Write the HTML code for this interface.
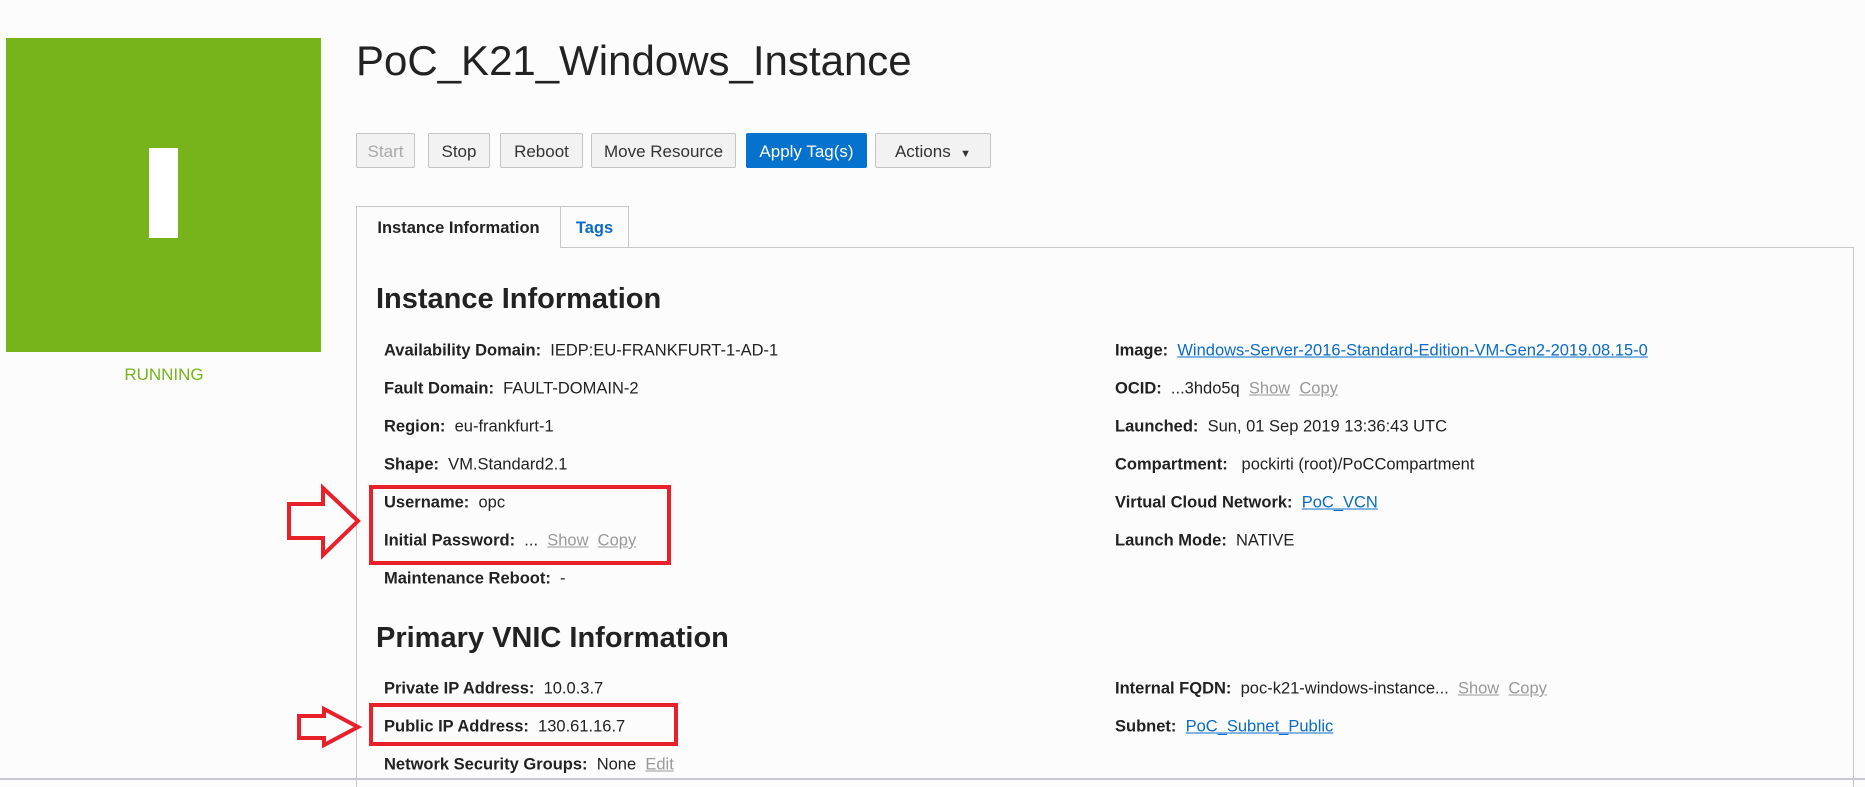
<!DOCTYPE html>
<html><head><meta charset="utf-8"><style>
body{margin:0;width:1865px;height:782px;background:#fcfcfc;font-family:"Liberation Sans",sans-serif;position:relative;overflow:hidden;color:#222}
.a{position:absolute;white-space:nowrap}
.btn{position:absolute;top:133px;height:35px;border:1px solid #c4c4c4;border-radius:2px;background:#f2f2f2;font-size:17px;line-height:35px;text-align:center;color:#333;box-sizing:border-box}
.row{position:absolute;font-size:16.5px;white-space:nowrap;transform:translateY(-50%)}
.row b{color:#222}
.lk{color:#0a6bc8;text-decoration:underline}
.gl{color:#999;text-decoration:underline}
</style></head><body>
<div class="a" style="left:6px;top:38px;width:315px;height:314px;background:#77b31a"></div>
<div class="a" style="left:149px;top:148px;width:29px;height:90px;background:#fff"></div>
<div class="a" style="left:0;width:328px;text-align:center;top:365px;font-size:17px;color:#77b31a">RUNNING</div>
<div class="a" style="left:356px;top:37px;font-size:42px;color:#222">PoC_K21_Windows_Instance</div>
<div class="btn" style="left:356px;width:59px;color:#aaa">Start</div>
<div class="btn" style="left:428px;width:62px">Stop</div>
<div class="btn" style="left:500px;width:83px">Reboot</div>
<div class="btn" style="left:591px;width:145px">Move Resource</div>
<div class="btn" style="left:746px;width:121px;background:#0572ce;border-color:#0572ce;color:#fff">Apply Tag(s)</div>
<div class="btn" style="left:875px;width:116px">Actions &nbsp;<span style="font-size:11px">▼</span></div>
<div class="a" style="left:356px;top:247px;width:1498px;height:540px;border:1px solid #c8c8c8;box-sizing:border-box;border-bottom:none"></div>
<div class="a" style="left:356px;top:206px;width:205px;height:42px;border:1px solid #c8c8c8;border-bottom:none;background:#fcfcfc;box-sizing:border-box;font-size:16.5px;font-weight:bold;line-height:42px;text-align:center">Instance Information</div>
<div class="a" style="left:561px;top:206px;width:68px;height:41px;border:1px solid #c8c8c8;border-left:none;border-bottom:none;box-sizing:border-box;font-size:16.5px;font-weight:bold;line-height:42px;text-align:center;color:#0a6bc8">Tags</div>
<div class="a" style="left:0;top:778px;width:1865px;height:2px;background:#c8c8d0"></div>
<div class="a" style="left:376px;top:283px;font-size:29px;font-weight:bold">Instance Information</div>
<div class="a" style="left:376px;top:622px;font-size:29px;font-weight:bold">Primary VNIC Information</div>
<div class="row" style="left:384px;top:351px"><b>Availability Domain:</b>&nbsp; IEDP:EU-FRANKFURT-1-AD-1</div>
<div class="row" style="left:384px;top:389px"><b>Fault Domain:</b>&nbsp; FAULT-DOMAIN-2</div>
<div class="row" style="left:384px;top:427px"><b>Region:</b>&nbsp; eu-frankfurt-1</div>
<div class="row" style="left:384px;top:465px"><b>Shape:</b>&nbsp; VM.Standard2.1</div>
<div class="row" style="left:384px;top:503px"><b>Username:</b>&nbsp; opc</div>
<div class="row" style="left:384px;top:541px"><b>Initial Password:</b>&nbsp; ... &nbsp;<span class="gl">Show</span>&nbsp; <span class="gl">Copy</span></div>
<div class="row" style="left:384px;top:579px"><b>Maintenance Reboot:</b>&nbsp; -</div>
<div class="row" style="left:384px;top:689px"><b>Private IP Address:</b>&nbsp; 10.0.3.7</div>
<div class="row" style="left:384px;top:727px"><b>Public IP Address:</b>&nbsp; 130.61.16.7</div>
<div class="row" style="left:384px;top:765px"><b>Network Security Groups:</b>&nbsp; None&nbsp; <span class="gl">Edit</span></div>
<div class="row" style="left:1115px;top:351px"><b>Image:</b>&nbsp; <span class="lk">Windows-Server-2016-Standard-Edition-VM-Gen2-2019.08.15-0</span></div>
<div class="row" style="left:1115px;top:389px"><b>OCID:</b>&nbsp; ...3hdo5q&nbsp; <span class="gl">Show</span>&nbsp; <span class="gl">Copy</span></div>
<div class="row" style="left:1115px;top:427px"><b>Launched:</b>&nbsp; Sun, 01 Sep 2019 13:36:43 UTC</div>
<div class="row" style="left:1115px;top:465px"><b>Compartment:</b>&nbsp;&nbsp; pockirti (root)/PoCCompartment</div>
<div class="row" style="left:1115px;top:503px"><b>Virtual Cloud Network:</b>&nbsp; <span class="lk">PoC_VCN</span></div>
<div class="row" style="left:1115px;top:541px"><b>Launch Mode:</b>&nbsp; NATIVE</div>
<div class="row" style="left:1115px;top:689px"><b>Internal FQDN:</b>&nbsp; poc-k21-windows-instance...&nbsp; <span class="gl">Show</span>&nbsp; <span class="gl">Copy</span></div>
<div class="row" style="left:1115px;top:727px"><b>Subnet:</b>&nbsp; <span class="lk">PoC_Subnet_Public</span></div>
<div class="a" style="left:369px;top:485px;width:302px;height:80px;border:4px solid #e8202a;box-sizing:border-box"></div>
<div class="a" style="left:369px;top:703px;width:309px;height:43px;border:4px solid #e8202a;box-sizing:border-box"></div>
<svg class="a" style="left:0;top:0" width="1865" height="782">
<polygon points="289,504 323,504 323,488 358,521 323,555 323,538 289,538" fill="none" stroke="#e8202a" stroke-width="4"/>
<polygon points="299,716 324,716 324,709 358,727 324,745 324,738 299,738" fill="none" stroke="#e8202a" stroke-width="4"/>
</svg>
</body></html>
